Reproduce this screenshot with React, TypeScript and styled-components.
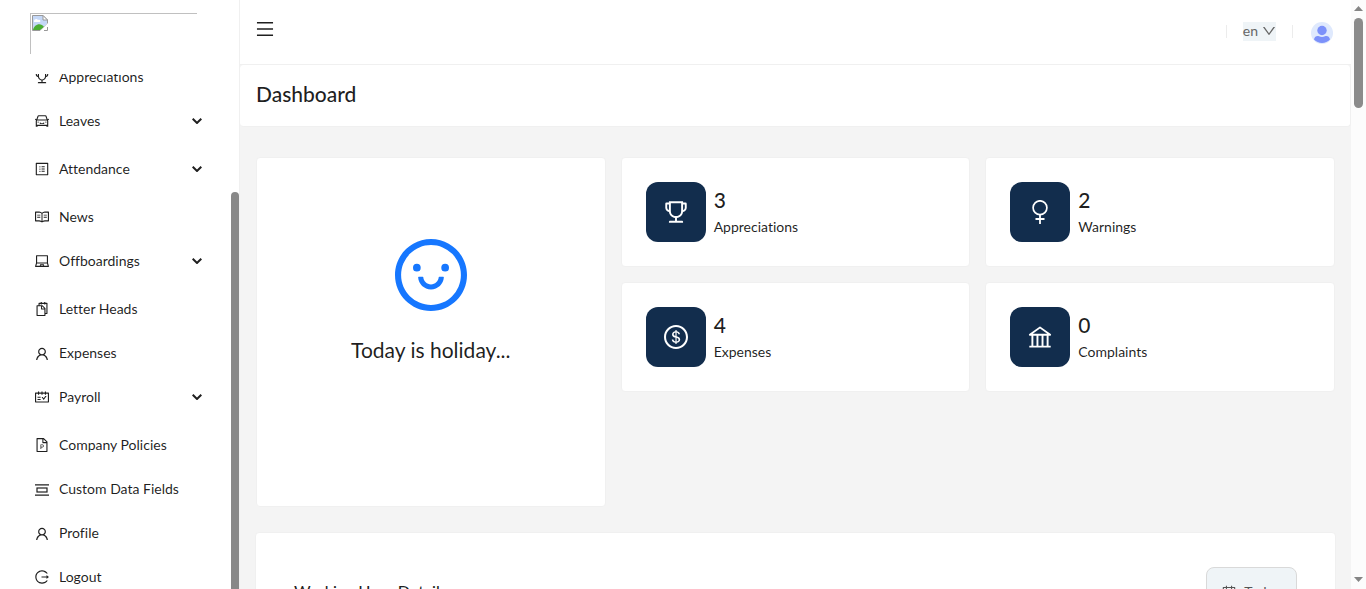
import React, { useLayoutEffect, useRef } from "react";
import styled, { createGlobalStyle } from "styled-components";
import type { IconType } from "react-icons";
import {
  AiOutlineBank,
  AiOutlineCalendar,
  AiOutlineCar,
  AiOutlineDollar,
  AiOutlineDown,
  AiOutlineFilePpt,
  AiOutlineLaptop,
  AiOutlineLogout,
  AiOutlineMenu,
  AiOutlineProfile,
  AiOutlineRead,
  AiOutlineSchedule,
  AiOutlineSmile,
  AiOutlineSnippets,
  AiOutlineTrophy,
  AiOutlineUser,
} from "react-icons/ai";

const GlobalStyle = createGlobalStyle`
  *, *::before, *::after { box-sizing: border-box; }
  body {
    margin: 0;
    overflow: hidden;
    background: #f4f4f4;
    color: rgba(0, 0, 0, 0.88);
    font-family: Lato, "Open Sans", sans-serif;
    font-size: 14px;
    line-height: 22px;
    font-variant-ligatures: none;
  }
  button, select { font: inherit; color: inherit; }
  h1, h2, p, ul { margin: 0; padding: 0; font-weight: 400; }
  svg { display: block; flex: none; }
`;

const TIGHT = "64 64 896 896";

const Shell = styled.div`
  display: flex;
  height: 100vh;
`;

const Sidebar = styled.aside`
  position: relative;
  display: flex;
  flex-direction: column;
  flex: 0 0 240px;
  background: #fff;
  border-right: 1px solid #f0f0f0;
`;

const LogoArea = styled.div`
  flex: none;
  height: 74px;
  padding: 13px 30px;
`;

const BrokenLogo = styled.div`
  width: 167px;
  height: 41px;
  padding: 1px;
  border-top: 1px solid #c0c0c0;
  border-left: 1px solid #c0c0c0;
`;

const NavScroll = styled.nav`
  flex: 1;
  min-height: 0;
  overflow-y: auto;
  scrollbar-width: none;
`;

const NavList = styled.ul`
  list-style: none;
  padding: 0 30px 0 28px;
`;

const NavItem = styled.li<{ $group?: boolean }>`
  margin-bottom: ${(p) => (p.$group ? 8 : 4)}px;
`;

const navRow = `
  display: flex;
  align-items: center;
  gap: 10px;
  width: 100%;
  height: 40px;
  padding: 0 7px;
  border: 0;
  background: none;
  color: inherit;
  text-align: left;
  text-decoration: none;
  cursor: pointer;
`;
const NavLink = styled.a`${navRow}`;
const NavButton = styled.button`${navRow}`;
const NavLabel = styled.span`flex: 1;`;

const SidebarThumb = styled.div`
  position: absolute;
  top: 192px;
  right: 0;
  bottom: -8px;
  width: 8px;
  border-radius: 4px;
  background: #888;
`;

const Page = styled.main`
  flex: 1;
  min-width: 0;
  overflow: hidden;
`;

const TopBar = styled.header`
  display: flex;
  align-items: center;
  justify-content: space-between;
  height: 65px;
  padding: 0 16px;
  background: #fff;
  border-bottom: 1px solid #f0f0f0;
`;

const IconButton = styled.button`
  display: flex;
  padding: 0;
  border: 0;
  background: none;
  cursor: pointer;
`;

const MenuButton = styled(IconButton)`
  padding-bottom: 6px;
`;

const Tools = styled.div`
  display: flex;
  align-items: center;
  gap: 16px;
  padding-bottom: 2px;
`;

const Divider = styled.span`
  width: 1px;
  height: 13px;
  background: #ececec;
`;

const LanguageButton = styled.button`
  display: flex;
  align-items: center;
  gap: 4px;
  height: 19px;
  padding: 0 0 1px;
  border: 0;
  background: #eff4f7;
  color: #666;
`;

const AvatarButton = styled(IconButton)`
  margin: 4px 2px 0;
`;

const TitleBar = styled.div`
  height: 62px;
  padding: 13px 16px;
  background: #fff;
  border: solid #f0f0f0;
  border-width: 0 1px 1px 0;
  border-radius: 4px;
`;

const Title = styled.h1`
  font-size: 21px;
  line-height: 32px;
  font-weight: 500;
`;

const Overview = styled.section`
  display: grid;
  grid-template-columns: repeat(3, 1fr);
  grid-template-rows: 110px 110px 1fr;
  gap: 15px;
  padding: 30px 16px 25px;
`;

const Card = styled.article`
  background: #fff;
  border: 1px solid #f0f0f0;
  border-radius: 4px;
`;

const HolidayCard = styled(Card)`
  grid-row: 1 / 4;
  display: flex;
  flex-direction: column;
  align-items: center;
  gap: 23px;
  min-height: 350px;
  padding-top: 81px;
  color: #1677ff;
`;

const HolidayText = styled.p`
  color: rgba(0, 0, 0, 0.88);
  font-size: 21px;
  line-height: 32px;
`;

const StatCard = styled(Card)`
  display: flex;
  align-items: center;
  gap: 8px;
  padding: 0 24px;
`;

const StatIcon = styled.div`
  display: grid;
  place-items: center;
  width: 60px;
  height: 60px;
  border-radius: 12px;
  background: #122d4d;
  color: #fff;
`;

const StatText = styled.div`
  padding-bottom: 3px;
`;

const StatValue = styled.p`
  font-size: 21px;
  line-height: 32px;
  font-weight: 500;
`;

const HoursCard = styled(Card)`
  display: flex;
  align-items: flex-start;
  justify-content: space-between;
  height: 320px;
  margin: 0 15px;
  padding: 34px 38px;
`;

const HoursTitle = styled.h2`
  padding-top: 8px;
  font-size: 16px;
  line-height: 32px;
  font-weight: 500;
`;

const TodayButton = styled.button`
  display: flex;
  align-items: center;
  justify-content: center;
  gap: 8px;
  width: 91px;
  height: 50px;
  border: 1px solid #d9d9d9;
  border-radius: 8px;
  background: #eff4f7;
  color: #555;
`;

const ScrollTrack = styled.div`
  display: flex;
  flex: 0 0 15px;
  flex-direction: column;
  align-items: center;
  padding: 6px 0 7px;
  background: #fcfcfc;
`;

const ScrollThumb = styled.div`
  width: 9px;
  height: 90px;
  margin: 7px 0 auto;
  border-radius: 5px;
  background: #8b8b8b;
`;

const BrokenImageIcon = () => (
  <svg width="16" height="16" viewBox="0 0 16 16" aria-hidden="true">
    <path d="M.5.5H11L15.500 5V9L8 15.500H.5z" fill="#c5d8f7" stroke="#999" />
    <path d="M2 6c0-2 3-3 4-1 2-1 3 1 2 2H2z" fill="#fff" />
    <path d="M1 15c1-6 8-8 11-3l-4 3z" fill="#4cae33" />
    <path d="M11 .5V5h4.500z" fill="#fff" stroke="#999" />
    <path d="M8 16l8-8v3l-5 5z" fill="#fff" />
    <path d="M12 15.500h3.500V12" fill="none" stroke="#999" />
  </svg>
);

const FieldsIcon = () => (
  <svg width="14" height="14" viewBox="0 0 14 14" fill="none" stroke="currentColor" aria-hidden="true">
    <path d="M0 2.900h14M0 13.100h14" strokeWidth="1.200" />
    <rect x="2" y="6" width="10" height="4" strokeWidth="1.200" />
  </svg>
);

const UserIcon = () => (
  <AiOutlineUser size={14} viewBox="64 0 896 896" aria-hidden="true" />
);

const Chevron = () => (
  <svg width="10" height="6" viewBox="0 0 10 6" fill="none" stroke="currentColor" strokeWidth="2" aria-hidden="true">
    <path d="M.7.7L5 5l4.300-4.300" />
  </svg>
);

const FemaleIcon = () => (
  <svg width="24" height="24" viewBox="0 0 24 24" fill="none" stroke="currentColor" aria-hidden="true">
    <circle cx="12" cy="7.700" r="6.900" strokeWidth="1.700" />
    <path d="M12 14.500V24M7.500 19h9" strokeWidth="1.800" />
  </svg>
);

const Avatar = () => (
  <svg width="22" height="22" viewBox="0 0 22 22" aria-hidden="true">
    <circle cx="11" cy="11" r="11" fill="#dfe9fd" />
    <circle cx="11" cy="8.500" r="4.700" fill="#7c91fa" />
    <path d="M3 17.500C3.500 14.500 6 13.500 8 14.300c2 .8 4 .8 6 0 2-.8 4.500.2 5 3.200A11 11 0 0 1 3 17.500z" fill="#7c91fa" />
  </svg>
);

const ScrollArrow = ({ down }: { down?: boolean }) => (
  <svg width="9" height="5" viewBox="0 0 9 5" fill="#858585" aria-hidden="true">
    <path d={down ? "M0 0h9L4.500 5z" : "M0 5h9L4.500 0z"} />
  </svg>
);

type Entry = { label: string; icon: IconType | React.FC; group?: boolean };

const entries: Entry[] = [
  { label: "Appreciations", icon: AiOutlineTrophy },
  { label: "Leaves", icon: AiOutlineCar, group: true },
  { label: "Attendance", icon: AiOutlineProfile, group: true },
  { label: "News", icon: AiOutlineRead },
  { label: "Offboardings", icon: AiOutlineLaptop, group: true },
  { label: "Letter Heads", icon: AiOutlineSnippets },
  { label: "Expenses", icon: UserIcon },
  { label: "Payroll", icon: AiOutlineSchedule, group: true },
  { label: "Company Policies", icon: AiOutlineFilePpt },
  { label: "Custom Data Fields", icon: FieldsIcon },
  { label: "Profile", icon: UserIcon },
  { label: "Logout", icon: AiOutlineLogout },
];

const stats: { value: number; label: string; icon: IconType | React.FC }[] = [
  { value: 3, label: "Appreciations", icon: AiOutlineTrophy },
  { value: 2, label: "Warnings", icon: FemaleIcon },
  { value: 4, label: "Expenses", icon: AiOutlineDollar },
  { value: 0, label: "Complaints", icon: AiOutlineBank },
];

const Glyph = ({ icon, size }: { icon: IconType | React.FC; size: number }) => {
  const Icon = icon as IconType;
  return <Icon size={size} viewBox={TIGHT} aria-hidden="true" />;
};

export default function App() {
  const nav = useRef<HTMLElement>(null);
  useLayoutEffect(() => {
    if (nav.current) nav.current.scrollTop = 17;
  }, []);

  return (
    <>
      <GlobalStyle />
      <Shell>
        <Sidebar>
          <LogoArea>
            <BrokenLogo role="img" aria-label="Company logo">
              <BrokenImageIcon />
            </BrokenLogo>
          </LogoArea>
          <NavScroll ref={nav}>
            <NavList>
              {entries.map(({ label, icon, group }) => (
                <NavItem key={label} $group={group}>
                  {group ? (
                    <NavButton type="button" aria-expanded={false}>
                      <Glyph icon={icon} size={14} />
                      <NavLabel>{label}</NavLabel>
                      <Chevron />
                    </NavButton>
                  ) : (
                    <NavLink href="#">
                      <Glyph icon={icon} size={14} />
                      <NavLabel>{label}</NavLabel>
                    </NavLink>
                  )}
                </NavItem>
              ))}
            </NavList>
          </NavScroll>
          <SidebarThumb />
        </Sidebar>
        <Page>
          <TopBar>
            <MenuButton type="button" aria-label="Toggle menu">
              <Glyph icon={AiOutlineMenu} size={18} />
            </MenuButton>
            <Tools>
              <Divider />
              <LanguageButton type="button">
                en
                <Glyph icon={AiOutlineDown} size={14} />
              </LanguageButton>
              <Divider />
              <AvatarButton type="button" aria-label="Account">
                <Avatar />
              </AvatarButton>
            </Tools>
          </TopBar>
          <TitleBar>
            <Title>Dashboard</Title>
          </TitleBar>
          <Overview>
            <HolidayCard>
              <Glyph icon={AiOutlineSmile} size={72} />
              <HolidayText>Today is holiday...</HolidayText>
            </HolidayCard>
            {stats.map(({ value, label, icon }) => (
              <StatCard key={label}>
                <StatIcon>
                  <Glyph icon={icon} size={24} />
                </StatIcon>
                <StatText>
                  <StatValue>{value}</StatValue>
                  <p>{label}</p>
                </StatText>
              </StatCard>
            ))}
          </Overview>
          <HoursCard>
            <HoursTitle>Working Hour Details</HoursTitle>
            <TodayButton type="button">
              <Glyph icon={AiOutlineCalendar} size={14} />
              Today
            </TodayButton>
          </HoursCard>
        </Page>
        <ScrollTrack aria-hidden="true">
          <ScrollArrow />
          <ScrollThumb />
          <ScrollArrow down />
        </ScrollTrack>
      </Shell>
    </>
  );
}
